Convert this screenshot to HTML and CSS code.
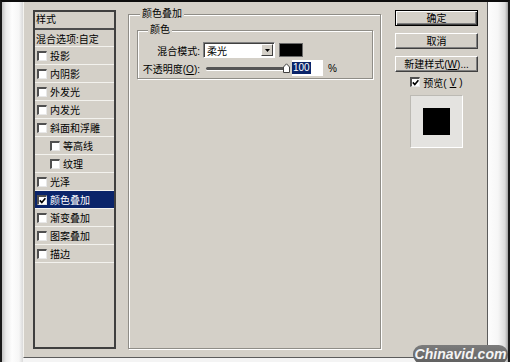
FILE: index.html
```html
<!DOCTYPE html>
<html lang="zh-CN">
<head>
  <meta charset="UTF-8">
  <title>图层样式 - 颜色叠加</title>
  <link rel="stylesheet" href="styles.css">
</head>
<body>
  <div class="screen">
    <div class="gutter gutter-left"></div>

    <div class="dialog">
      <div class="style-list">
        <div class="list-head">样式</div>
        <div class="list-row blend">混合选项:自定</div>
        <div class="list-row"><span class="check"></span>投影</div>
        <div class="list-row"><span class="check"></span>内阴影</div>
        <div class="list-row"><span class="check"></span>外发光</div>
        <div class="list-row"><span class="check"></span>内发光</div>
        <div class="list-row"><span class="check"></span>斜面和浮雕</div>
        <div class="list-row sub"><span class="check"></span>等高线</div>
        <div class="list-row sub"><span class="check"></span>纹理</div>
        <div class="list-row"><span class="check"></span>光泽</div>
        <div class="list-row selected">
          <span class="check"><svg width="7" height="7" viewBox="0 0 7 7"><path d="M0.8 3.4 L2.8 5.6 L6.4 1.2" fill="none" stroke="#000" stroke-width="1.6"/></svg></span>颜色叠加
        </div>
        <div class="list-row"><span class="check"></span>渐变叠加</div>
        <div class="list-row"><span class="check"></span>图案叠加</div>
        <div class="list-row"><span class="check"></span>描边</div>
      </div>

      <fieldset class="group outer">
        <legend>颜色叠加</legend>
        <fieldset class="group inner">
          <legend>颜色</legend>
          <div class="field-row">
            <label class="field-label">混合模式:</label>
            <div class="select">
              <span class="select-value">柔光</span>
              <span class="select-btn"><svg width="5" height="3" viewBox="0 0 5 3"><path d="M0 0 H5 L2.5 3 Z" fill="#000"/></svg></span>
            </div>
            <span class="swatch"></span>
          </div>
          <div class="field-row">
            <label class="field-label">不透明度(<u>O</u>):</label>
            <div class="slider">
              <span class="track"></span>
              <svg class="thumb" width="7" height="10" viewBox="0 0 7 10"><path d="M0.5 9.5 V4 L3.5 0.8 L6.5 4 V9.5 Z" fill="#fff" stroke="#404040"/></svg>
            </div>
            <div class="num-input"><span class="sel">100</span></div>
            <span class="unit">%</span>
          </div>
        </fieldset>
      </fieldset>

      <div class="side">
        <button class="btn default">确定</button>
        <button class="btn">取消</button>
        <button class="btn last">新建样式(<u>W</u>)...</button>
        <label class="preview-check">
          <span class="check"><svg width="7" height="7" viewBox="0 0 7 7"><path d="M0.8 3.4 L2.8 5.6 L6.4 1.2" fill="none" stroke="#000" stroke-width="1.6"/></svg></span>预览(<u>V</u>)
        </label>
        <div class="preview-box"><span class="preview-swatch"></span></div>
      </div>
    </div>

    <div class="gutter gutter-right"></div>
    <div class="watermark">Chinavid.com</div>
  </div>
</body>
</html>
```

FILE: styles.css
```css
body {
  margin: 0;
  font-family: "Liberation Sans", "Noto Sans CJK SC", sans-serif;
  font-size: 10px;
  color: #000;
}

.screen {
  position: relative;
  width: 510px;
  height: 362px;
  box-sizing: border-box;
  display: flex;
  align-items: flex-start;
  border-top: 2px solid #0c0c0c;
  border-left: 2px solid #1a1a1a;
  border-right: 2px solid #1a1a1a;
  background: #f4f4f4;
  overflow: hidden;
}

.gutter {
  align-self: stretch;
}

.gutter-left {
  width: 21px;
  background: linear-gradient(to right, #c4c4c4 0, #ececec 4px, #fdfdfd 10px, #f6f6f6 17px, #dadada 21px);
}

.gutter-right {
  width: 20px;
  background: linear-gradient(to right, #fdfdfd 0, #f6f6f6 10px, #dcdcdc 17px, #a0a0a0 20px);
}

.dialog {
  width: 465px;
  height: 356px;
  box-sizing: border-box;
  display: flex;
  padding: 8px 9px;
  background: #d4d0c8;
  border-left: 1px solid #f4f3ef;
  border-right: 1px solid #5c5c5c;
  border-bottom: 1px solid #5c5c5c;
}

/* style list */
.style-list {
  width: 83px;
  box-sizing: border-box;
  display: flex;
  flex-direction: column;
  border: 2px solid #3f3f3f;
}

.list-head {
  height: 16px;
  line-height: 16px;
  padding-left: 1px;
  border-bottom: 2px solid #4d4d4d;
}

.list-row {
  height: 17px;
  flex-shrink: 0;
  display: flex;
  align-items: center;
  gap: 3px;
  padding-left: 2px;
  border-bottom: 1px solid #f3f2ee;
}

.list-row.blend {
  height: 16px;
  padding-left: 1px;
}

.list-row.sub {
  padding-left: 15px;
}

.list-row.selected {
  background: #0a246a;
  color: #fff;
}

.check {
  width: 10px;
  height: 10px;
  box-sizing: border-box;
  display: flex;
  background: #fff;
  border-style: solid;
  border-width: 2px 1px 1px 2px;
  border-color: #505050 #e8e8e8 #e8e8e8 #505050;
}

/* group boxes */
.group {
  margin: 0;
  min-width: 0;
  border: 1px solid #8f8d87;
  box-shadow: inset 1px 1px 0 #fff, 1px 1px 0 #fff;
}

.group legend {
  padding: 0 2px;
  line-height: 12px;
  background: #d4d0c8;
}

.outer {
  width: 253px;
  box-sizing: border-box;
  margin: -2px 14px 0 12px;
  padding: 4px 7px 0 8px;
}

.outer > legend {
  margin-left: 3px;
}

.inner {
  padding: 6px 0 2px 4px;
}

.inner > legend {
  margin-left: 6px;
}

.field-row {
  display: flex;
  align-items: center;
  height: 16px;
}

.field-row + .field-row {
  margin-top: 2px;
}

.field-label {
  width: 58px;
  margin-right: 3px;
  text-align: right;
  white-space: nowrap;
}

.select {
  width: 72px;
  height: 16px;
  box-sizing: border-box;
  display: flex;
  align-items: center;
  background: #fff;
  border: 1px solid;
  border-color: #808080 #fff #fff #808080;
  box-shadow: inset 1px 1px 0 #404040;
}

.select-value {
  flex: 1;
  padding-left: 3px;
}

.select-btn {
  width: 12px;
  height: 12px;
  box-sizing: border-box;
  margin-right: 1px;
  display: flex;
  align-items: center;
  justify-content: center;
  background: #d4d0c8;
  border: 1px solid;
  border-color: #fff #404040 #404040 #fff;
}

.swatch {
  width: 24px;
  height: 14px;
  box-sizing: border-box;
  margin-left: 4px;
  background: #000;
  border: 1px solid #6a6a6a;
}

.slider {
  width: 84px;
  height: 16px;
  margin-left: 3px;
  display: flex;
  align-items: center;
}

.track {
  width: 78px;
  height: 3px;
  border-radius: 2px;
  background: #555;
  box-shadow: 0 1px 0 #fff;
}

.thumb {
  margin-left: -1px;
}

.num-input {
  width: 31px;
  height: 16px;
  margin-left: 2px;
  display: flex;
  align-items: center;
  background: #fff;
}

.num-input .sel {
  padding: 0 1px;
  line-height: 12px;
  background: #0a246a;
  color: #fff;
}

.unit {
  margin-left: 5px;
}

/* right column */
.side {
  width: 83px;
  display: flex;
  flex-direction: column;
}

.btn {
  height: 16px;
  margin: 0 0 7px;
  padding: 0;
  box-sizing: border-box;
  font: inherit;
  line-height: 13px;
  color: #000;
  background: #d4d0c8;
  border: 1px solid;
  border-color: #fff #404040 #404040 #fff;
  box-shadow: inset -1px -1px 0 #808080;
}

.btn.default {
  border: 1px solid #000;
  box-shadow: inset 1px 1px 0 #fff, inset -1px -1px 0 #404040, inset -2px -2px 0 #808080;
}

.btn.last {
  margin-bottom: 4px;
}

.preview-check {
  height: 12px;
  display: flex;
  align-items: center;
  justify-content: center;
  gap: 3px;
}

.preview-box {
  width: 53px;
  height: 53px;
  box-sizing: border-box;
  margin: 7px auto 0;
  display: flex;
  align-items: center;
  justify-content: center;
  background: #e4e3e0;
  border: 1px solid;
  border-color: #bcbab4 #fff #fff #bcbab4;
}

.preview-swatch {
  width: 27px;
  height: 27px;
  background: #000;
}

.watermark {
  position: absolute;
  left: 411px;
  top: 343px;
  width: 95px;
  height: 19px;
  border-radius: 9px;
  background: linear-gradient(#7c7c7c, #5e5e5e);
  color: #f4f4f4;
  font: italic bold 14px "Liberation Sans", sans-serif;
  line-height: 19px;
  text-align: center;
}
```
